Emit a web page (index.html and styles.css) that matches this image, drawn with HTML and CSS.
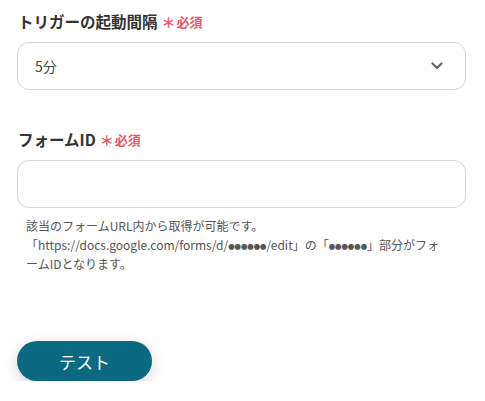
FILE: index.html
```html
<!DOCTYPE html>
<html lang="ja">
<head>
<meta charset="utf-8">
<link rel="stylesheet" href="styles.css">
</head>
<body>
<div class="form">
  <div class="field">
    <div class="label">トリガーの起動間隔<span class="req"><span class="ast">＊</span>必須</span></div>
    <div class="select">
      <span class="value">5分</span>
      <svg class="chev" width="12" height="8" viewBox="0 0 12 8"><path d="M1.5 1.5 L6 6 L10.5 1.5" fill="none" stroke="#666" stroke-width="2.2" stroke-linecap="round" stroke-linejoin="round"/></svg>
    </div>
  </div>
  <div class="field second">
    <div class="label">フォームID<span class="req"><span class="ast">＊</span>必須</span></div>
    <div class="input"></div>
    <p class="help">該当のフォームURL内から取得が可能です。<br>「https://docs.google.com/forms/d/<span class="dots">●●●●●●</span>/edit」の「<span class="dots">●●●●●●</span>」部分がフォームIDとなります。</p>
  </div>
  <div class="actions">
    <button class="btn">テスト</button>
  </div>
</div>
</body>
</html>
```

FILE: styles.css
```css
html, body {
  margin: 0;
  padding: 0;
  background: #fff;
}
body {
  font-family: "Noto Sans CJK JP", "Noto Sans", sans-serif;
  color: #333;
}
.form {
  padding: 8px 19px 0 17px;
}
.field {
  display: flex;
  flex-direction: column;
}
.second {
  margin-top: 36px;
}
.label {
  font-size: 15.5px;
  font-weight: 700;
  line-height: 22px;
  color: #333;
  padding-left: 1px;
  display: flex;
  align-items: center;
}
.req {
  color: #f05468;
  font-size: 13px;
  font-weight: 700;
  margin-left: 4px;
  display: flex;
  align-items: center;
  padding-top: 3px;
}
.ast {
  font-size: 14px;
  margin-right: 1px;
}
.select, .input {
  box-sizing: border-box;
  height: 48px;
  border: 1px solid #d3d5dc;
  border-radius: 12px;
  margin-top: 9px;
  background: #fff;
}
.select {
  display: flex;
  align-items: center;
  justify-content: space-between;
  padding: 0 22px 0 17px;
}
.value {
  font-size: 14px;
  color: #444;
}
.help {
  margin: 8px 0 0;
  padding: 0 18px 0 9px;
  font-size: 12px;
  line-height: 19px;
  color: #555;
}
.dots {
  display: inline-block;
  font-size: 6.4px;
  line-height: 1;
  vertical-align: 1px;
}
.actions {
  margin-top: 68px;
}
.btn {
  width: 135px;
  height: 40px;
  border: none;
  border-radius: 20px;
  background: #0b6a82;
  color: #fff;
  font-family: "Noto Sans CJK JP", "Noto Sans", sans-serif;
  font-size: 17px;
  box-shadow: 0 4px 14px rgba(0, 0, 0, 0.18);
}
```
